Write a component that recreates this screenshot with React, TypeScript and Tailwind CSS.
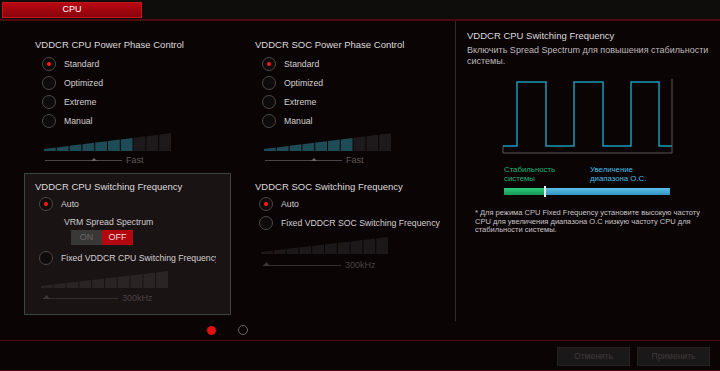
import React from "react";

function Bars({ w, h, teal, color }: { w: number; h: number; teal: number; color: string }) {
  const cols = 10;
  const cw = w / cols;
  const minH = 2;
  const y = (x: number) => h - (minH + (x / w) * (h - minH));
  return (
    <svg width={w} height={h} className="block">
      {Array.from({ length: cols }).map((_, i) => {
        const x0 = i * cw;
        const x1 = x0 + cw - 1;
        const fill = i < teal ? "#1d4b56" : color;
        return (
          <polygon
            key={i}
            points={`${x0},${h} ${x0},${y(x0)} ${x1},${y(x1)} ${x1},${h}`}
            fill={fill}
          />
        );
      })}
    </svg>
  );
}

function Slider({
  w,
  thumb,
  label,
  dim,
  thumbLeft,
}: {
  w: number;
  thumb: number;
  label: string;
  dim?: boolean;
  thumbLeft?: boolean;
}) {
  const line = dim ? "#332d2e" : "#4a4646";
  const tri = dim ? "#3d3637" : "#6a6666";
  return (
    <div className="flex items-center h-[10px]">
      <svg width={w} height={10} className="block">
        <line x1={0} y1={5.5} x2={w} y2={5.5} stroke={line} strokeWidth={1} />
        {thumbLeft ? (
          <polygon points={`0,6 3.5,2 7,6`} fill={tri} />
        ) : (
          <polygon points={`${thumb - 3},6 ${thumb},3 ${thumb + 3},6`} fill={tri} />
        )}
      </svg>
      <span
        className={`ml-[4px] text-[9px] leading-[10px] ${dim ? "text-[#4a4243]" : "text-[#5e5a5a]"}`}
      >
        {label}
      </span>
    </div>
  );
}

function Radio({ on }: { on?: boolean }) {
  return (
    <div className="w-[14px] h-[14px] rounded-full border border-[#4c4848] bg-[#0f0a0b] flex items-center justify-center shrink-0">
      {on && <div className="w-[4px] h-[4px] rounded-full bg-[#ff1a1a]" />}
    </div>
  );
}

function RadioRow({
  label,
  on,
  ml,
  gap,
  clip,
}: {
  label: string;
  on?: boolean;
  ml: string;
  gap: string;
  clip?: boolean;
}) {
  return (
    <div className={`flex items-center h-[19px] ${ml} ${gap}`}>
      <Radio on={on} />
      <span
        className={`text-[8.7px] leading-[12px] text-[#d2d0d0] whitespace-nowrap ${clip ? "overflow-hidden" : ""}`}
      >
        {label}
      </span>
    </div>
  );
}

function PhaseSection({ title }: { title: string }) {
  return (
    <div className="h-[152px] pl-[11px] pt-[18px] flex flex-col">
      <div className="text-[9.5px] leading-[12px] text-[#dcdada] whitespace-nowrap">{title}</div>
      <div className="mt-[3px] flex flex-col">
        <RadioRow label="Standard" on ml="ml-[7px]" gap="gap-[8px]" />
        <RadioRow label="Optimized" ml="ml-[7px]" gap="gap-[8px]" />
        <RadioRow label="Extreme" ml="ml-[7px]" gap="gap-[8px]" />
        <RadioRow label="Manual" ml="ml-[7px]" gap="gap-[8px]" />
      </div>
      <div className="mt-[3px] ml-[9px]">
        <Bars w={128} h={18} teal={7} color="#1e1a1b" />
      </div>
      <div className="mt-[4px] ml-[10px]">
        <Slider w={77} thumb={49} label="Fast" />
      </div>
    </div>
  );
}

export default function App() {
  return (
    <div className="w-[720px] h-[371px] overflow-hidden bg-[#0b0405] flex flex-col font-['Liberation_Sans',Arial,sans-serif]">
      {/* top tab bar */}
      <div className="h-[19px] bg-[#0f0c0c] pl-[2px] pt-[2px] flex">
        <div className="w-[140px] h-[16px] border border-[#c8141e] bg-gradient-to-b from-[#b80812] to-[#8a040c] flex items-center justify-center text-[9px] text-white">
          CPU
        </div>
      </div>
      <div className="h-[2px] bg-[#4e0a0e]" />

      {/* main */}
      <div className="h-[319px] flex">
        <div className="w-[455px] flex flex-col pl-[24px]">
          <div className="flex gap-[13px]">
            {/* column 1 */}
            <div className="w-[207px] flex flex-col">
              <PhaseSection title="VDDCR CPU Power Phase Control" />
              <div className="h-[142px] border border-[#3a4447] bg-[#1a1314] pl-[10px] pt-[7px] flex flex-col">
                <div className="text-[9.5px] leading-[12px] text-[#dcdada] whitespace-nowrap">
                  VDDCR CPU Switching Frequency
                </div>
                <div className="mt-[1px]">
                  <RadioRow label="Auto" on ml="ml-[4px]" gap="gap-[8px]" />
                </div>
                <div className="mt-[3px] ml-[29px] text-[8.7px] leading-[12px] text-[#cfcccc]">
                  VRM Spread Spectrum
                </div>
                <div className="mt-[2px] ml-[36px] flex h-[15px] w-[62px]">
                  <div className="w-[31px] bg-[#3a3737] text-[#6a6666] text-[9px] flex items-center justify-center">
                    ON
                  </div>
                  <div className="w-[31px] bg-[#b3060f] text-[#f4dede] text-[9px] flex items-center justify-center">
                    OFF
                  </div>
                </div>
                <div className="mt-[3px] flex items-center h-[19px] ml-[4px] gap-[8px] w-[177px] overflow-hidden">
                  <Radio />
                  <span className="text-[8.7px] leading-[12px] text-[#d2d0d0] whitespace-nowrap">
                    Fixed VDDCR CPU Switching Frequency
                  </span>
                </div>
                <div className="mt-[4px] ml-[6px]">
                  <Bars w={128} h={17} teal={0} color="#2a2425" />
                </div>
                <div className="mt-[5px] ml-[8px]">
                  <Slider w={75} thumb={0} thumbLeft dim label="300kHz" />
                </div>
              </div>
            </div>
            {/* column 2 */}
            <div className="w-[207px] flex flex-col">
              <PhaseSection title="VDDCR SOC Power Phase Control" />
              <div className="h-[142px] pl-[11px] pt-[8px] flex flex-col">
                <div className="text-[9.5px] leading-[12px] text-[#dcdada] whitespace-nowrap">
                  VDDCR SOC Switching Frequency
                </div>
                <div className="mt-[1px] flex flex-col">
                  <RadioRow label="Auto" on ml="ml-[4px]" gap="gap-[8px]" />
                  <RadioRow label="Fixed VDDCR SOC Switching Frequency" ml="ml-[4px]" gap="gap-[8px]" />
                </div>
                <div className="mt-[5px] ml-[6px]">
                  <Bars w={128} h={17} teal={0} color="#1c1718" />
                </div>
                <div className="mt-[6px] ml-[8px]">
                  <Slider w={78} thumb={0} thumbLeft dim label="300kHz" />
                </div>
              </div>
            </div>
          </div>
          {/* pagination */}
          <div className="mt-[10px] ml-[183px] flex items-center gap-[22px]">
            <div className="w-[9px] h-[9px] rounded-full bg-[#e01010]" />
            <div className="w-[10px] h-[10px] rounded-full border-[1.5px] border-[#6a6666]" />
          </div>
        </div>

        {/* right info panel */}
        <div className="w-[265px] h-[300px] border-l border-[#2f2b2b] pl-[11px] pt-[9px] flex flex-col">
          <div className="text-[9.5px] leading-[12px] text-[#dcdada] whitespace-nowrap">
            VDDCR CPU Switching Frequency
          </div>
          <div className="mt-[3px] text-[9px] leading-[11px] text-[#bdb9b9] whitespace-nowrap">
            Включить Spread Spectrum для повышения стабильности
            <br />
            системы.
          </div>
          <div className="mt-[9px] ml-[33px]">
            <svg width={176} height={80} className="block">
              <path d="M3,70 V77 H172 V3" fill="none" stroke="#5a5656" strokeWidth={1} />
              <path
                d="M3,70 H17 V6 H46 V70 H74 V6 H103 V70 H131 V6 H159 V70 H172"
                fill="none"
                stroke="#1a98b6"
                strokeWidth={1.5}
              />
            </svg>
          </div>
          <div className="mt-[9px] ml-[37px] flex text-[7.8px] leading-[9px]">
            <div className="w-[86px] text-[#1fb57a]">
              Стабильность
              <br />
              системы
            </div>
            <div className="text-[#48bfe2]">
              Увеличение
              <br />
              диапазона О.С.
            </div>
          </div>
          <div className="mt-[5px] ml-[37px] relative w-[166px] h-[7px] flex">
            <div className="w-[41px] h-full bg-gradient-to-b from-[#2cc97a] to-[#139a55]" />
            <div className="flex-1 h-full bg-gradient-to-b from-[#5cc0e6] to-[#2f95c2]" />
            <div className="absolute left-[40px] top-[-2px] w-[2px] h-[11px] bg-[#f0f0f0]" />
          </div>
          <div className="mt-[14px] ml-[8px] text-[7.5px] leading-[8.5px] text-[#c9c5c5] whitespace-nowrap">
            * Для режима CPU Fixed Frequency установите высокую частоту
            <br />
            CPU для увеличения диапазона О.С низкую частоту CPU для
            <br />
            стабильности системы.
          </div>
        </div>
      </div>

      {/* bottom bar */}
      <div className="h-[1px] bg-[#520a0e]" />
      <div className="h-[29px] flex justify-end items-start pt-[6px] pr-[10px] gap-[7px]">
        <div className="w-[73px] h-[19px] bg-[#1b1819] border border-[#252122] flex items-center justify-center text-[8.5px] text-[#3e3839]">
          Отменить
        </div>
        <div className="w-[73px] h-[19px] bg-[#1b1819] border border-[#252122] flex items-center justify-center text-[8.5px] text-[#3e3839]">
          Применить
        </div>
      </div>
      <div className="h-[1px] bg-[#520a0e]" />
    </div>
  );
}
